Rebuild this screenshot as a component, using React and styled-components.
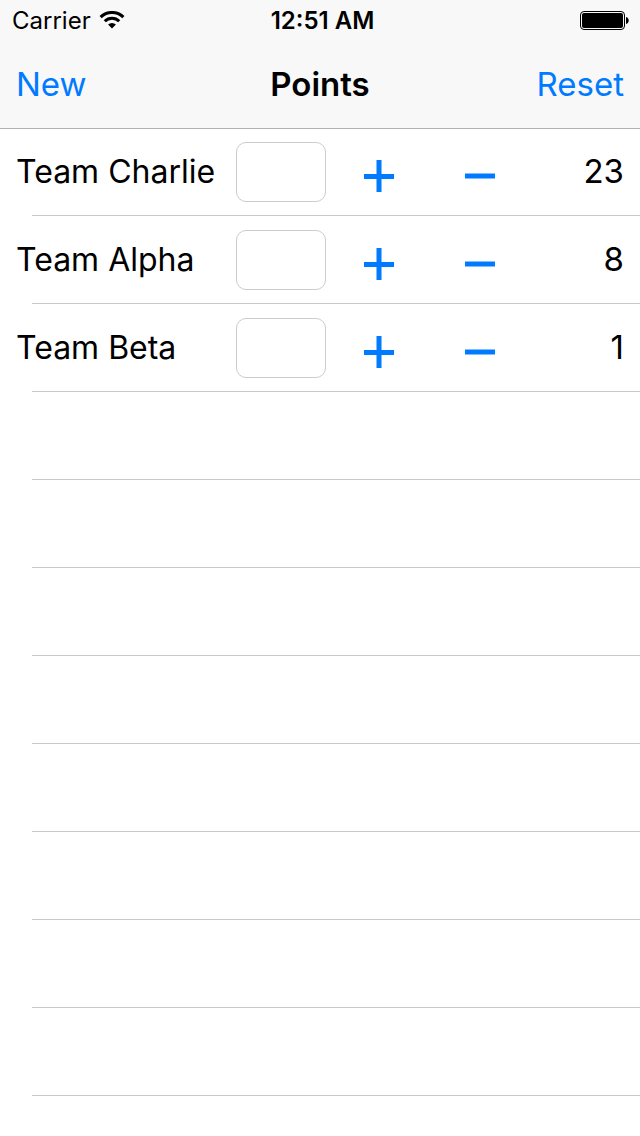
import React, { useState } from "react";
import styled, { createGlobalStyle } from "styled-components";

const Global = createGlobalStyle`
  * { box-sizing: border-box; }
  body { margin: 0; background: #fff; font-family: Inter, "Liberation Sans", sans-serif; color: #000; }
`;
const Screen = styled.div`
  min-height: 100vh;
  display: flex;
  flex-direction: column;
`;
const Header = styled.header`
  background: #f8f8f8;
  box-shadow: 0 1px 0 #b2b2b2;
`;
const StatusBar = styled.div`
  display: grid;
  grid-template-columns: 1fr auto 1fr;
  align-items: center;
  height: 40px;
  padding: 2px 11px 0 12px;
  font-size: 24px;
  line-height: 38px;
`;
const Carrier = styled.div`
  display: flex;
  align-items: center;
  gap: 8px;
`;
const Clock = styled.time`
  padding-left: 4px;
  font-weight: 600;
`;
const Battery = styled.svg`
  justify-self: end;
`;
const NavBar = styled.nav`
  display: grid;
  grid-template-columns: 1fr auto 1fr;
  align-items: center;
  height: 88px;
  padding: 0 16px;
`;
const Title = styled.h1`
  margin: 0;
  font-size: 33px;
  font-weight: 600;
  line-height: 40px;
`;
const NavButton = styled.button`
  justify-self: ${(p) => p.$side};
  padding: 0;
  border: 0;
  background: none;
  color: #007aff;
  font: inherit;
  font-size: 33px;
  line-height: 40px;
`;
const TeamList = styled.ul`
  flex: 1;
  margin: 0;
  padding: 0;
  list-style: none;
`;
const Row = styled.li`
  height: 88px;
  padding: 0 16px;
  display: grid;
  grid-template-columns: 220px 90px 106px 96px 1fr;
  align-items: center;
  background: linear-gradient(#c8c7cc, #c8c7cc) 32px 100% / 100% 1px no-repeat;
`;
const TeamName = styled.label`
  font-size: 32px;
  line-height: 40px;
`;
const PointsInput = styled.input`
  width: 90px;
  height: 60px;
  border: 1px solid #cccccc;
  border-radius: 10px;
  background: #fff;
  font: inherit;
  font-size: 32px;
  text-align: center;
`;
const StepButton = styled.button`
  justify-self: center;
  display: flex;
  padding: 8px 0 0;
  border: 0;
  background: none;
  color: #007aff;
`;
const Score = styled.output`
  padding-bottom: 2px;
  font-size: 33px;
  line-height: 40px;
  text-align: right;
`;

const WifiIcon = () => (
  <svg width="26" height="20" viewBox="0 1.5 26 20" role="img" aria-label="Wi-Fi">
    <g fill="none" stroke="#000" strokeWidth="3">
      <path d="M1.6 7.6a16.2 16.2 0 0 1 22.8 0" />
      <path d="M5.8 11.8a10.2 10.2 0 0 1 14.4 0" />
    </g>
    <path d="M13 19l-3.9-4a5.5 5.5 0 0 1 7.8 0z" />
  </svg>
);
const BatteryIcon = () => (
  <Battery width="49" height="20" viewBox="0 0 49 20" role="img" aria-label="Battery full">
    <rect x="0.5" y="0.5" width="44" height="18" rx="3.5" fill="none" stroke="#000" />
    <rect x="2" y="2" width="41" height="15" rx="2" />
    <path d="M46 6c3.600 .8 3.600 6.200 0 7z" />
  </Battery>
);
const PlusIcon = () => (
  <svg width="30" height="32" viewBox="0 0 30 32" aria-hidden="true">
    <path d="M0 16.5h30M15 0v32" stroke="currentColor" strokeWidth="5" />
  </svg>
);
const MinusIcon = () => (
  <svg width="30" height="32" viewBox="0 0 30 32" aria-hidden="true">
    <path d="M0 16h30" stroke="currentColor" strokeWidth="5" />
  </svg>
);

const initialTeams = [
  { name: "Team Charlie", score: 23 },
  { name: "Team Alpha", score: 8 },
  { name: "Team Beta", score: 1 },
];

export default function App() {
  const [teams, setTeams] = useState(initialTeams);
  const [entries, setEntries] = useState({});
  const change = (i, sign) =>
    setTeams(teams.map((t, j) => (j === i ? { ...t, score: t.score + sign * (Number(entries[i]) || 1) } : t)));
  return (
    <Screen>
      <Global />
      <Header>
        <StatusBar>
          <Carrier>Carrier <WifiIcon /></Carrier>
          <Clock>12:51 AM</Clock>
          <BatteryIcon />
        </StatusBar>
        <NavBar>
          <NavButton $side="start" onClick={() => setTeams([...teams, { name: "Team", score: 0 }])}>New</NavButton>
          <Title>Points</Title>
          <NavButton $side="end" onClick={() => setTeams(teams.map((t) => ({ ...t, score: 0 })))}>Reset</NavButton>
        </NavBar>
      </Header>
      <TeamList>
        {teams.map((t, i) => (
          <Row key={i}>
            <TeamName htmlFor={`points-${i}`}>{t.name}</TeamName>
            <PointsInput id={`points-${i}`} inputMode="numeric" value={entries[i] || ""}
              onChange={(e) => setEntries({ ...entries, [i]: e.target.value })} />
            <StepButton aria-label={`Add points to ${t.name}`} onClick={() => change(i, 1)}><PlusIcon /></StepButton>
            <StepButton aria-label={`Take points from ${t.name}`} onClick={() => change(i, -1)}><MinusIcon /></StepButton>
            <Score htmlFor={`points-${i}`}>{t.score}</Score>
          </Row>
        ))}
        {Array.from({ length: Math.max(0, 11 - teams.length) }, (_, i) => (
          <Row key={`empty-${i}`} aria-hidden="true" />
        ))}
      </TeamList>
    </Screen>
  );
}
